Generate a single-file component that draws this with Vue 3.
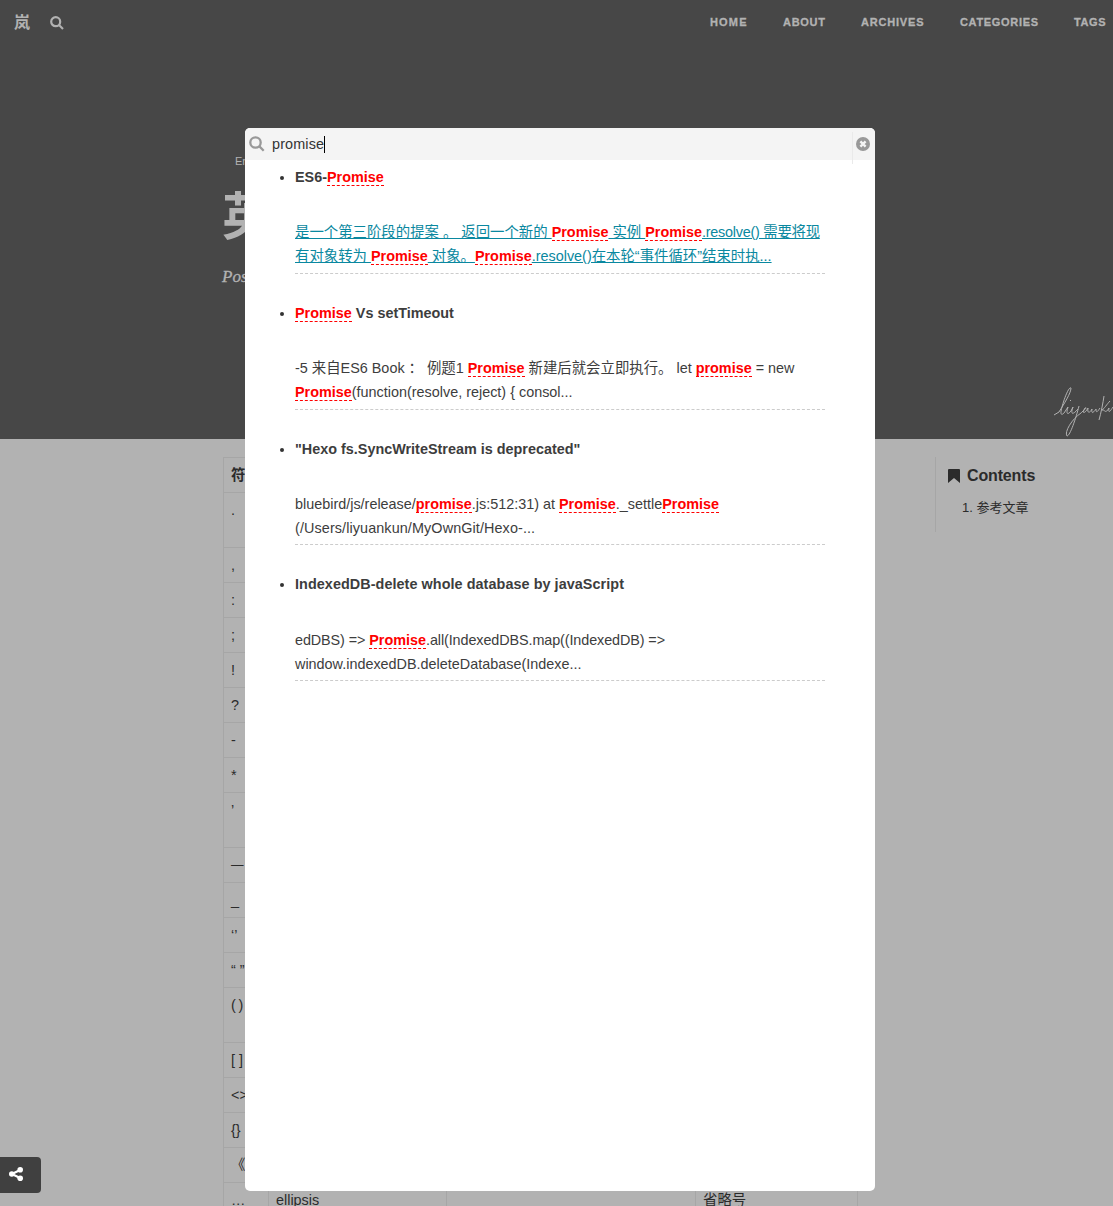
<script setup>
import { ref } from 'vue'

const nav = [
  { name: 'HOME', w: 36.5 },
  { name: 'ABOUT', w: 42 },
  { name: 'ARCHIVES', w: 62.5 },
  { name: 'CATEGORIES', w: 78 },
  { name: 'TAGS', w: 31.5 },
]

const rows = [
  { mark: '符号', head: true },
  { mark: '.', tall: true },
  { mark: ',' },
  { mark: ':' },
  { mark: ';' },
  { mark: '!' },
  { mark: '?' },
  { mark: '-' },
  { mark: '*' },
  { mark: '’', tall: true },
  { mark: '—', dash: true },
  { mark: '_' },
  { mark: '‘’' },
  { mark: '“ ”' },
  { mark: '( )', tall: true, tight: true },
  { mark: '[ ]' },
  { mark: '<>' },
  { mark: '{}' },
  { mark: '《》' },
  { mark: '…', en: 'ellipsis', zh: '省略号' },
]

const query = ref('promise')

const results = [
  {
    title: 'ES6-Promise',
    active: true,
    lines: [
      '是一个第三阶段的提案 。 返回一个新的 Promise 实例 Promise.resolve() 需要将现',
      '有对象转为 Promise 对象。Promise.resolve()在本轮“事件循环”结束时执...',
    ],
  },
  {
    title: 'Promise Vs setTimeout',
    lines: [
      '-5 来自ES6 Book ： 例题1 Promise 新建后就会立即执行。 let promise = new',
      'Promise(function(resolve, reject) { consol...',
    ],
  },
  {
    title: '"Hexo fs.SyncWriteStream is deprecated"',
    lines: [
      'bluebird/js/release/promise.js:512:31) at Promise._settlePromise',
      '(/Users/liyuankun/MyOwnGit/Hexo-...',
    ],
  },
  {
    title: 'IndexedDB-delete whole database by javaScript',
    wide: true,
    lines: [
      'edDBS) => Promise.all(IndexedDBS.map((IndexedDB) =>',
      'window.indexedDB.deleteDatabase(Indexe...',
    ],
  },
]

const split = (text) => text.split(/(promise)/i).filter(Boolean)
const isHit = (part) => part.toLowerCase() === query.value
const spacing = (part) => ({
  tight: part.startsWith('.resolve() '),
  snug: part.includes('=>'),
  loose: part.startsWith('(/Users'),
})
</script>

<template>
  <div class="page">
    <header class="banner">
      <div class="topbar">
        <span class="brand">岚</span>
        <svg class="find" viewBox="0 0 14 14"><circle cx="5.7" cy="5.7" r="4.5" /><path d="M9 9l4 4" /></svg>
        <nav>
          <a v-for="n in nav" :key="n.name"><svg :width="n.w" height="14"><text x="0" y="11" :textLength="n.w">{{ n.name }}</text></svg></a>
        </nav>
      </div>
      <div class="intro">
        <div class="tag">English</div>
        <h1>英语标点</h1>
        <div class="posted">Posted by</div>
      </div>
      <svg class="sign" viewBox="0 0 60 54">
        <path d="M1 30L6 27C11 19 18 8 18 3C16 1 11 14 9 22C7 29 8 31 11 28L15 22C13 28 14 31 18 26L20 22C17 30 20 30 25 24" />
        <path d="M26 21C23 33 17 51 14 51C11 47 19 34 28 28C31 25 35 22 32 23C28 29 32 29 35 23C34 29 37 28 39 24C38 30 41 27 43 24C43 29 45 26 47 23" />
        <path d="M51 11C50 18 48 28 46 35M57 16C54 19 51 24 49 25C52 24 52 30 56 23C55 30 58 25 60 22M17 16L18 15" />
      </svg>
    </header>

    <main class="body">
      <div class="sheet">
        <div v-for="(r, i) in rows" :key="i" class="row" :class="{ tall: r.tall, head: r.head, tightmark: r.tight, dash: r.dash }">
          <span>{{ r.mark }}</span><span>{{ r.en }}</span><span></span><span>{{ r.zh }}</span>
        </div>
      </div>
      <aside>
        <div class="toc-title">
          <svg viewBox="0 0 12 14"><path d="M0 1Q0 0 1 0H11Q12 0 12 1V14L6 9L0 14Z" /></svg>
          <span>Contents</span>
        </div>
        <div class="toc-item">1. 参考文章</div>
      </aside>
    </main>

    <div class="share">
      <svg viewBox="0 0 14 14"><path d="M11 3L3 7L11 11" /><circle cx="11.2" cy="2.8" r="2.8" /><circle cx="2.8" cy="7" r="2.8" /><circle cx="11.2" cy="11.2" r="2.8" /></svg>
    </div>

    <section class="modal">
      <div class="search">
        <svg class="lens" viewBox="0 0 16 16"><circle cx="6.5" cy="6.5" r="5.2" /><path d="M10.4 10.4l4.3 4.3" /></svg>
        <span class="query">{{ query }}</span><i class="caret"></i>
        <div class="close">
          <svg viewBox="0 0 14 14"><circle cx="7" cy="7" r="7" /><path d="M4.4 4.4l5.2 5.2M9.6 4.4l-5.2 5.2" /></svg>
        </div>
      </div>
      <ul>
        <li v-for="item in results" :key="item.title">
          <div class="title" :class="{ wide: item.wide }"><span v-for="(s, k) in split(item.title)" :key="k" :class="{ hit: isHit(s) }">{{ s }}</span></div>
          <div class="excerpt" :class="{ active: item.active }">
            <div v-for="line in item.lines" :key="line" class="line"><template v-for="(s, k) in split(line)" :key="k"><b v-if="isHit(s)" class="hit">{{ s }}</b><span v-else :class="spacing(s)">{{ s }}</span></template></div>
          </div>
        </li>
      </ul>
    </section>
  </div>
</template>

<style>
body { margin: 0; overflow: hidden; }
</style>

<style scoped>
.page {
  position: relative;
  width: 1113px;
  height: 1206px;
  overflow: hidden;
  background: #b2b2b2;
  color: #2b2b2b;
  font: 14.4px/24px "Liberation Sans", "Noto Sans CJK SC", sans-serif;
}
.banner { position: relative; height: 439px; background: #474747; color: #b2b2b2; }
.topbar { display: flex; height: 45px; padding: 0 7.5px 0 14px; align-items: center; box-sizing: border-box; }
.brand { width: 16px; margin-right: 20px; font-size: 16px; font-weight: 700; }
.find { width: 14px; height: 14px; fill: none; stroke: #b2b2b2; stroke-width: 2.2; }
nav { margin: -2px 0 0 auto; display: flex; gap: 36.3px; }
nav a { display: flex; }
nav svg { overflow: visible; }
nav text { font-size: 11px; font-weight: 700; fill: #b2b2b2; stroke: #b2b2b2; stroke-width: 0.3; }
.intro { padding: 106px 0 0 222px; white-space: nowrap; }
.tag { margin-left: 13px; font-size: 11px; line-height: 20px; }
h1 { margin: 15px 0 0; font-size: 51px; line-height: 64px; font-weight: 700; }
.posted { margin-top: 15px; font: italic 17px/24px "Liberation Serif", serif; -webkit-text-stroke: 0.3px #b2b2b2; }
.sign { position: absolute; left: 1053px; top: 385px; width: 60px; height: 54px; fill: none; stroke: #b2b2b2; stroke-width: 1; }
.body { display: flex; align-items: flex-start; padding: 18px 0 0 223px; }
.sheet { width: 635px; margin-right: 77px; border-top: 1px solid #a6a6a6; }
.row { display: flex; height: 35px; }
.row.tall { height: 55px; }
.row.head { font-weight: 700; }
.row.tightmark { letter-spacing: -0.7px; }
.row.dash { font-size: 12.5px; }
.row span { box-sizing: border-box; border-left: 1px solid #a6a6a6; border-bottom: 1px solid #a6a6a6; padding: 5px 0 0 7px; overflow: hidden; white-space: nowrap; }
.row span:nth-child(1) { width: 45px; }
.row span:nth-child(2) { width: 178px; }
.row span:nth-child(3) { width: 249px; }
.row span:nth-child(4) { width: 163px; border-right: 1px solid #a6a6a6; }
aside { box-sizing: border-box; height: 75px; width: 150px; border-left: 1px solid #a6a6a6; padding: 7px 0 0 12px; }
.toc-title { display: flex; align-items: center; font-size: 16px; font-weight: 700; letter-spacing: -0.15px; }
.toc-title svg { width: 12px; height: 14px; margin-right: 7px; fill: #2b2b2b; }
.toc-item { margin: 8px 0 0 14px; font-size: 13px; }
.share { position: absolute; left: 0; top: 1157px; width: 41px; height: 36px; border-radius: 0 4px 4px 0; background: #404040; }
.share svg { display: block; width: 14px; height: 14px; margin: 10px 0 0 9px; fill: #fff; stroke: #fff; stroke-width: 0; }
.share path { fill: none; stroke-width: 2.2; }
.modal { position: absolute; left: 245px; top: 128px; width: 630px; height: 1063px; border-radius: 5px; background: #fff; color: #3d3d3d; }
.search { display: flex; align-items: center; height: 32px; border-radius: 5px 5px 0 0; background: #f4f4f4; }
.lens { width: 16px; height: 16px; margin: 0 7px 0 4px; fill: none; stroke: #999; stroke-width: 2.3; }
.query { color: #333; letter-spacing: 0.13px; }
.caret { width: 1px; height: 17px; background: #000; }
.close { align-self: flex-start; flex: none; margin: 4px 5px 0 auto; width: 17px; height: 32px; border-left: 1px solid #eaeaea; display: flex; justify-content: flex-end; }
.close svg { width: 14px; height: 14px; margin-top: 5px; fill: #999; }
.close path { stroke: #f4f4f4; stroke-width: 2.4; }
ul { margin: 0; padding: 5.2px 50px 0; list-style: disc; }
li { height: 135.7px; }
li::marker { color: #333; }
.title { font-weight: 700; height: 24px; white-space: nowrap; }
.wide { letter-spacing: 0.06px; }
.excerpt { margin-top: 31.25px; height: 52.55px; border-bottom: 1px dashed #ccc; }
.line { height: 24px; white-space: pre; }
.active { color: #0a88a0; }
.active .line { text-decoration: underline; }
.tight { letter-spacing: -0.25px; }
.snug { letter-spacing: -0.1px; }
.loose { letter-spacing: 0.1px; }
.hit { display: inline-block; height: 20px; line-height: 24px; color: #f00; border-bottom: 1px dashed #f00; font-weight: 700; vertical-align: top; }
</style>
